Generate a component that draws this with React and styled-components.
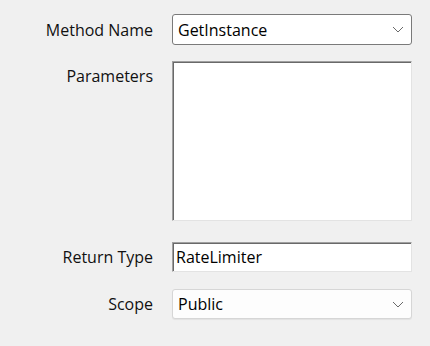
import React from "react";
import styled, { createGlobalStyle } from "styled-components";

const GlobalStyle = createGlobalStyle`
  html, body {
    margin: 0;
    padding: 0;
    background: #f0f0f0;
  }
  body {
    font-family: "Open Sans", "Noto Sans", sans-serif;
    font-size: 16px;
    font-weight: 500;
    color: #000000;
  }
`;

const Form = styled.div`
  display: grid;
  grid-template-columns: 153px 240px;
  column-gap: 19px;
  align-content: start;
  padding-top: 14px;
  width: 430px;
  height: 346px;
  box-sizing: border-box;
`;

const Label = styled.div`
  text-align: right;
  line-height: 22px;
  white-space: nowrap;
  color: #111111;
  align-self: ${(p) => (p.$top ? "start" : "center")};
  padding-top: ${(p) => (p.$top ? "4px" : "0")};
  margin-top: ${(p) => p.$gap || 0}px;
`;

const Combo = styled.div`
  box-sizing: border-box;
  height: ${(p) => p.$h || 31}px;
  margin-top: ${(p) => p.$gap || 0}px;
  border: 1px solid ${(p) => (p.$light ? "#d6d6d6" : "#7a7a7a")};
  border-radius: 3px;
  background: ${(p) => (p.$light ? "#fdfdfd" : "#ffffff")};
  box-shadow: ${(p) => (p.$light ? "0 1px 1px rgba(0,0,0,0.06)" : "none")};
  display: flex;
  align-items: center;
  justify-content: space-between;
  padding: 0 7px 0 5px;
  line-height: 22px;
`;

const Chevron = styled.svg`
  width: 12px;
  height: 7px;
  flex: none;
`;

const TextBox = styled.div`
  box-sizing: border-box;
  height: ${(p) => p.$h}px;
  margin-top: ${(p) => p.$gap || 0}px;
  background: #ffffff;
  border-top: 1px solid #a0a0a0;
  border-left: 1px solid #a0a0a0;
  border-right: 1px solid #e3e3e3;
  border-bottom: 1px solid #e3e3e3;
  box-shadow: inset 1px 1px 0 #696969;
  padding: 0 4px 0 3px;
  line-height: 22px;
  display: flex;
  align-items: ${(p) => (p.$multi ? "flex-start" : "center")};
`;

const Arrow = () => (
  <Chevron viewBox="0 0 12 7">
    <polyline points="1,1 6,6 11,1" fill="none" stroke="#6a6a6a" strokeWidth="1" />
  </Chevron>
);

export default function App() {
  return (
    <>
      <GlobalStyle />
      <Form>
        <Label>Method Name</Label>
        <Combo>
          <span>GetInstance</span>
          <Arrow />
        </Combo>

        <Label $top $gap={16}>Parameters</Label>
        <TextBox $h={160} $gap={16} $multi />

        <Label $gap={21}>Return Type</Label>
        <TextBox $h={30} $gap={21}>RateLimiter</TextBox>

        <Label $gap={17}>Scope</Label>
        <Combo $light $h={30} $gap={17}>
          <span>Public</span>
          <Arrow />
        </Combo>
      </Form>
    </>
  );
}
